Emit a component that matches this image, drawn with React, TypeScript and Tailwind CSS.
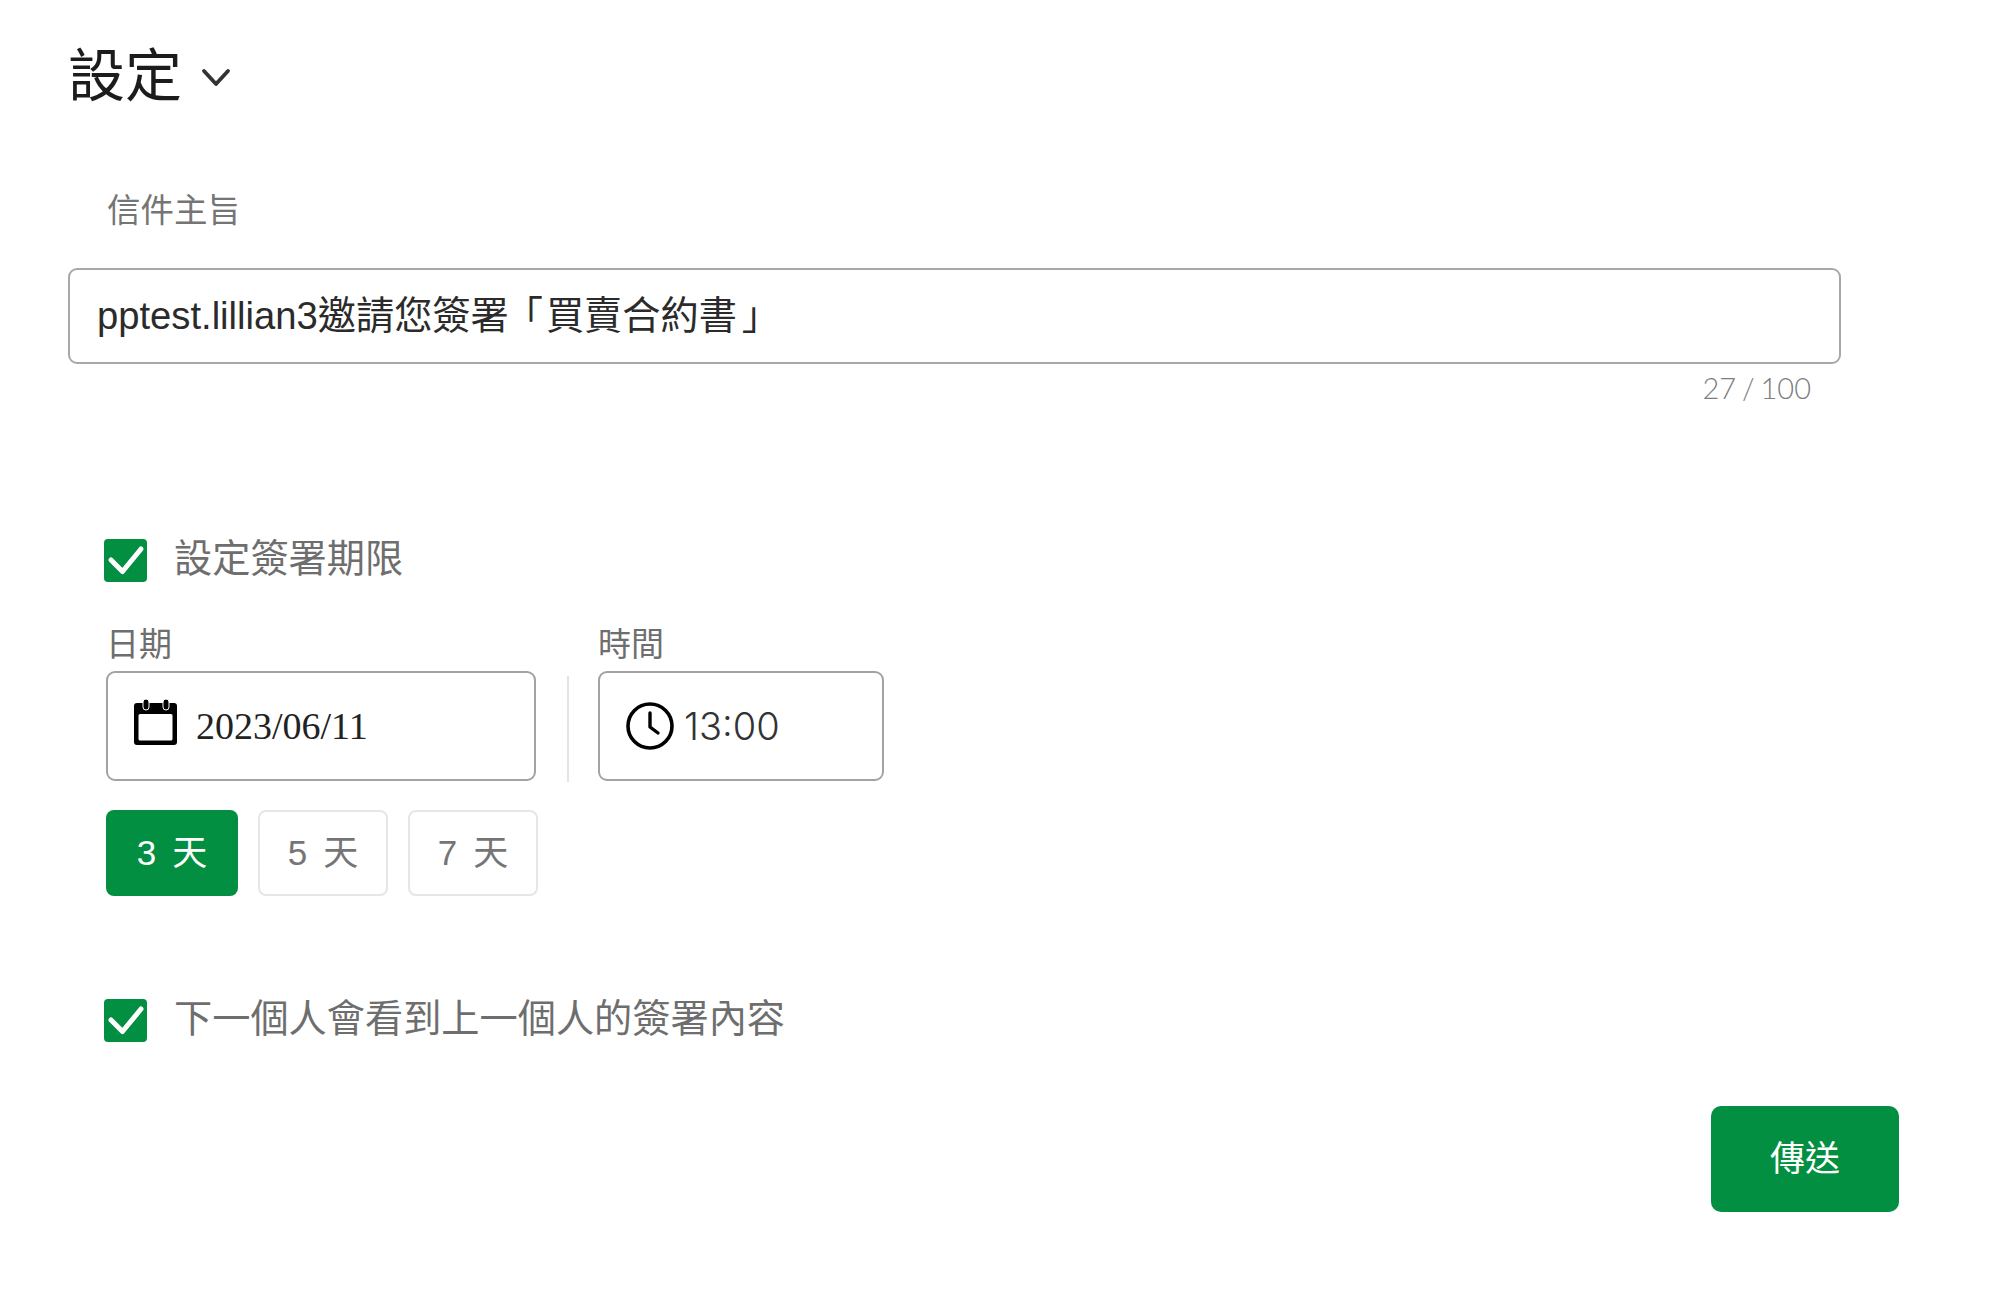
import { ReactNode } from 'react'

const GREEN = 'bg-[#028f41]'

function CheckBox() {
  return (
    <div className={`w-[43px] h-[43px] rounded-[4px] ${GREEN} shrink-0`}>
      <svg width="43" height="43" viewBox="0 0 43 43" fill="none" aria-hidden="true">
        <path d="M7 21l11.5 11.5L37 10" stroke="#fff" strokeWidth="5" strokeLinecap="round" strokeLinejoin="round" />
      </svg>
    </div>
  )
}

function CheckRow({ label }: { label: string }) {
  return (
    <div className="flex items-center gap-[27px] ml-[104px] h-[43px]">
      <CheckBox />
      <span className="text-[38.2px] leading-[44px] mb-[4px] text-[#6e6e6e]">{label}</span>
    </div>
  )
}

function Field({ label, width, children }: { label: string; width: string; children: ReactNode }) {
  return (
    <div className="flex flex-col">
      <span className="text-[33px] leading-[32px] text-[#6e6e6e] mb-[10px]">{label}</span>
      <div className={`${width} h-[110px] border-2 border-[#a3a3a3] rounded-[9px] flex items-center bg-white`}>
        {children}
      </div>
    </div>
  )
}

function DayButton({ days, active }: { days: number; active?: boolean }) {
  return (
    <button
      className={`h-[86px] rounded-[8px] text-[35px] flex items-center justify-center gap-[16px] ${
        active ? `w-[132px] ${GREEN} text-white` : 'w-[130px] bg-white border-2 border-[#e6e6e6] text-[#757575]'
      }`}
    >
      <span>{days}</span>
      <span>天</span>
    </button>
  )
}

export default function App() {
  return (
    <div className="w-[2000px] h-[1292px] bg-white flex flex-col font-['Liberation_Sans','Noto_Sans_CJK_TC',sans-serif]">
      {/* 標題 */}
      <div className="flex items-center gap-[18px] ml-[68px] mt-[46px] h-[60px]">
        <h1 className="text-[57px] leading-[60px] text-[#1c1c1c]">設定</h1>
        <svg width="32" height="22" viewBox="0 0 32 22" fill="none" aria-hidden="true" className="mt-[4px]">
          <path d="M4 4l12 13L28 4" stroke="#333" strokeWidth="3.8" strokeLinecap="round" strokeLinejoin="round" />
        </svg>
      </div>

      {/* 信件主旨 */}
      <label className="ml-[107px] mt-[85px] text-[33.5px] leading-[40px] text-[#757575]">信件主旨</label>
      <div className="ml-[68px] mt-[37px] w-[1773px] h-[96px] border-2 border-[#a8a8a8] rounded-[9px] flex items-center pl-[27px]">
        <span className="text-[38.2px] text-[#2b2b2b] whitespace-nowrap">
          pptest.lillian3邀請您簽署<span className="inline-block -ml-[4px] mr-[3px]">「</span>買賣合約書<span className="inline-block ml-[5px]">」</span>
        </span>
      </div>
      <div className="w-[1811px] mt-[8px] text-right text-[29px] leading-[32px] font-light text-[#7e7e7e] font-['Lato',sans-serif] [word-spacing:-2px]">
        27 / 100
      </div>

      {/* 簽署期限 */}
      <div className="mt-[135px]">
        <CheckRow label="設定簽署期限" />
      </div>

      <div className="flex ml-[106px] mt-[47px]">
        <Field label="日期" width="w-[430px]">
          <svg width="43" height="46" viewBox="0 0 43 46" fill="none" aria-hidden="true" className="ml-[26px] mb-[8px]">
            <path d="M3 4h37a3 3 0 013 3v36a3 3 0 01-3 3H3a3 3 0 01-3-3V7a3 3 0 013-3z" fill="#000" />
            <rect x="4.5" y="15" width="34" height="26.5" rx="1.5" fill="#fff" />
            <rect x="9" y="0" width="6" height="11" rx="3" fill="#000" stroke="#fff" strokeWidth="1" />
            <rect x="29" y="0" width="6" height="11" rx="3" fill="#000" stroke="#fff" strokeWidth="1" />
          </svg>
          <span className="ml-[19px] text-[38px] text-[#222] font-['Liberation_Serif',serif]">2023/06/11</span>
        </Field>
        <div className="self-end w-[2px] h-[106px] bg-[#e4e4e4] ml-[31px] mr-[29px] -mb-[1px]" />
        <Field label="時間" width="w-[286px]">
          <svg width="48" height="48" viewBox="0 0 48 48" fill="none" aria-hidden="true" className="ml-[26px]">
            <circle cx="24" cy="24" r="22" stroke="#000" strokeWidth="3.6" />
            <path d="M24 11v14l8 6" stroke="#000" strokeWidth="3.4" strokeLinecap="round" strokeLinejoin="round" />
          </svg>
          <span className="ml-[10px] text-[38px] text-[#333] font-light font-['Inter',sans-serif]">13:00</span>
        </Field>
      </div>

      <div className="flex gap-[20px] ml-[106px] mt-[29px]">
        <DayButton days={3} active />
        <DayButton days={5} />
        <DayButton days={7} />
      </div>

      <div className="mt-[103px]">
        <CheckRow label="下一個人會看到上一個人的簽署內容" />
      </div>

      <button className={`ml-[1711px] mt-[64px] w-[188px] h-[106px] rounded-[10px] ${GREEN} text-white text-[35px]`}>
        傳送
      </button>
    </div>
  )
}
